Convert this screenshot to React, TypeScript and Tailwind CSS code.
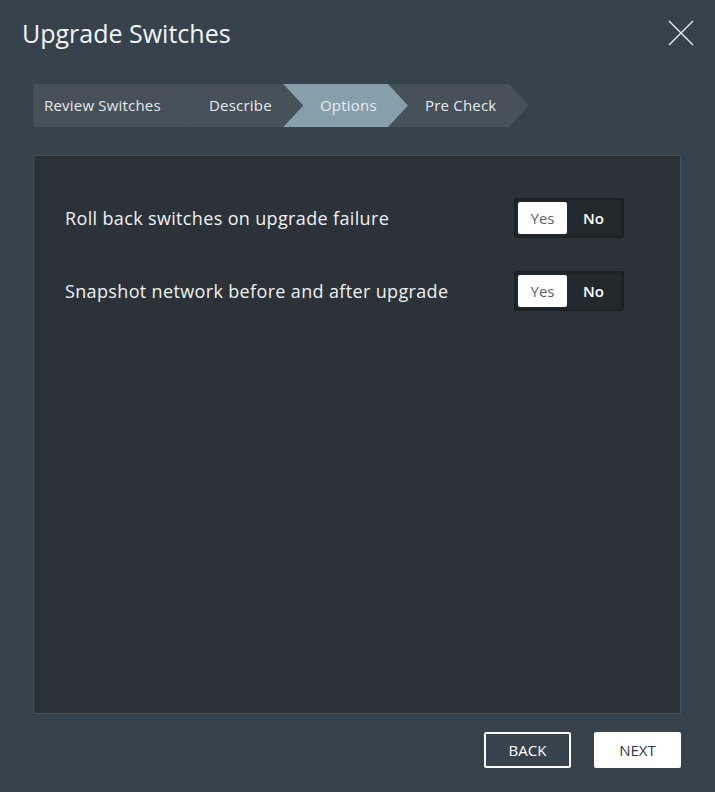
import { useState } from "react";

type Step = { label: string; active?: boolean; width: number; pl: number };

const steps: Step[] = [
  { label: "Review Switches", width: 170, pl: 11 },
  { label: "Describe", width: 120, pl: 26 },
  { label: "Options", width: 125, pl: 37, active: true },
  { label: "Pre Check", width: 141, pl: 37 },
];

function Breadcrumb() {
  return (
    <div className="flex h-[43px] pl-[33px]">
      {steps.map((s, i) => (
        <div
          key={s.label}
          className={`flex h-full items-center text-[15px] tracking-[0.2px] text-[#e6eaec] ${
            s.active ? "bg-[#86a0ab]" : "bg-[#46515a]"
          } ${i === 0 ? "rounded-l-[3px]" : "-ml-[20px]"}`}
          style={{
            width: s.width,
            paddingLeft: s.pl,
            zIndex: steps.length - i,
            clipPath:
              i === 0
                ? "polygon(0 0, calc(100% - 20px) 0, 100% 50%, calc(100% - 20px) 100%, 0 100%)"
                : "polygon(0 0, calc(100% - 20px) 0, 100% 50%, calc(100% - 20px) 100%, 0 100%, 20px 50%)",
          }}
        >
          {s.label}
        </div>
      ))}
    </div>
  );
}

function YesNo({ value, onChange }: { value: boolean; onChange: (v: boolean) => void }) {
  return (
    <div className="flex h-[40px] w-[110px] items-center rounded-[3px] bg-[#22292d] p-[4px] shadow-[inset_0_0_4px_rgba(0,0,0,0.5)]">
      <button
        type="button"
        onClick={() => onChange(true)}
        className={`h-[32px] w-[49px] rounded-[2px] text-[15px] ${
          value ? "bg-white font-medium text-[#56626a]" : "text-white font-semibold"
        }`}
      >
        Yes
      </button>
      <button
        type="button"
        onClick={() => onChange(false)}
        className={`h-[32px] flex-1 rounded-[2px] text-[15px] ${
          !value ? "bg-white font-medium text-[#56626a]" : "text-white font-semibold"
        }`}
      >
        No
      </button>
    </div>
  );
}

export default function App() {
  const [rollback, setRollback] = useState(true);
  const [snapshot, setSnapshot] = useState(true);

  return (
    <div
      className="relative flex h-[792px] w-[715px] flex-col bg-[#37434c] text-white"
      style={{ fontFamily: '"Open Sans", "Liberation Sans", sans-serif' }}
    >
      <div className="flex h-[66px] items-center justify-between pl-[22px] pr-[21px]">
        <h1 className="text-[25px] font-normal leading-none text-[#f2f4f5]">Upgrade Switches</h1>
        <button type="button" aria-label="Close" className="text-[#e8ecee]">
          <svg width="26" height="26" viewBox="0 0 26 26" fill="none" stroke="currentColor" strokeWidth="1.4">
            <path d="M1 1 L25 25 M25 1 L1 25" />
          </svg>
        </button>
      </div>

      <div className="mt-[18px]">
        <Breadcrumb />
      </div>

      <div className="ml-[33px] mr-[34px] mt-[28px] h-[559px] border border-[#46525a] bg-[#2c3338] px-[31px] pt-[42px]">
        <div className="flex flex-col gap-[33px]">
          <div className="flex items-center justify-between pr-[25px]">
            <span className="text-[18px] tracking-[0.35px] text-[#eef1f2]">Roll back switches on upgrade failure</span>
            <YesNo value={rollback} onChange={setRollback} />
          </div>
          <div className="flex items-center justify-between pr-[25px]">
            <span className="text-[18px] tracking-[0.35px] text-[#eef1f2]">Snapshot network before and after upgrade</span>
            <YesNo value={snapshot} onChange={setSnapshot} />
          </div>
        </div>
      </div>

      <div className="mt-[18px] flex justify-end gap-[23px] pr-[34px]">
        <button
          type="button"
          className="h-[36px] w-[87px] rounded-[2px] border-2 border-white text-[15px] font-medium text-white"
        >
          BACK
        </button>
        <button
          type="button"
          className="h-[36px] w-[87px] rounded-[2px] bg-white text-[15px] font-medium text-[#2f3b43]"
        >
          NEXT
        </button>
      </div>
    </div>
  );
}
